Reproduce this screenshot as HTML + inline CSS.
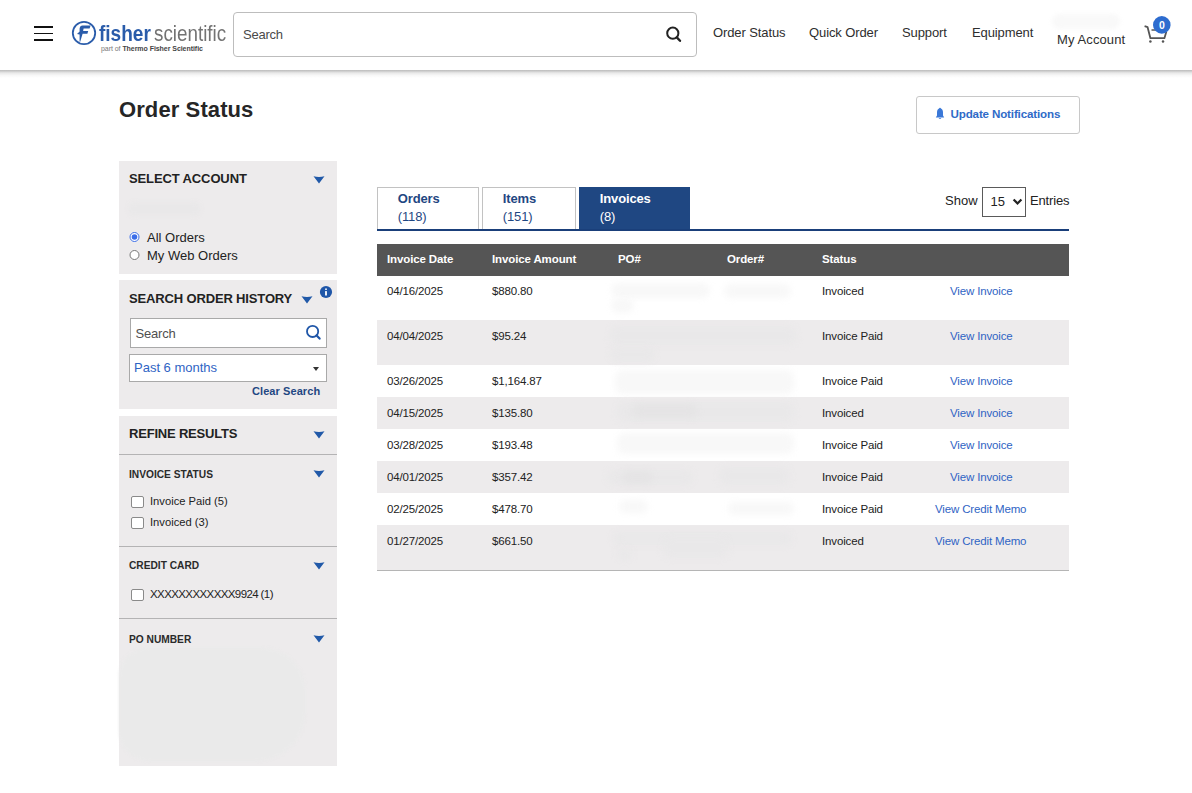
<!DOCTYPE html>
<html><head><meta charset="utf-8">
<style>
*{box-sizing:border-box;margin:0;padding:0}
html,body{width:1192px;height:793px;overflow:hidden;background:#fff;font-family:"Liberation Sans",sans-serif;color:#222}
.abs{position:absolute}
.t{position:absolute;white-space:nowrap;line-height:1}
#hdr{position:absolute;left:0;top:0;width:1192px;height:70px;background:#fff}
#shd{position:absolute;left:0;top:70px;width:1192px;height:8px;background:linear-gradient(#bfbfbf 0,#c6c6c6 1px,#dcdcdc 2px,#ececec 3.5px,#f8f8f8 5.5px,#fff 8px)}
.ham{position:absolute;left:34px;width:19px;height:2px;background:#111}
#sbox{position:absolute;left:233px;top:12px;width:464px;height:45px;border:1px solid #bdbdbd;border-radius:4px;background:#fff}
.nav{position:absolute;top:26px;font-size:13px;color:#2e2e2e;line-height:13px;white-space:nowrap;letter-spacing:-0.1px}
.panel{position:absolute;left:119px;width:218px;background:#edebec}
.ph{position:absolute;left:10px;font-size:13px;font-weight:700;color:#222;line-height:1;white-space:nowrap}
.arr{position:absolute;width:12px;height:8px;background:#2159a8;clip-path:path("M0.5 0.3 Q6 1.9 11.5 0.3 L6 7.6 Z")}
.sep{position:absolute;left:0;width:218px;height:1px;background:#b4b3b4}
.sub{position:absolute;left:10px;font-size:10.2px;font-weight:700;color:#2a2a2a;line-height:1;white-space:nowrap}
.cb{position:absolute;left:12px;width:13px;height:12px;border:1px solid #8a8a8a;border-radius:2px;background:#fff}
.cbl{position:absolute;left:31px;font-size:11.2px;letter-spacing:0px;color:#222;line-height:1;white-space:nowrap;margin-top:0.4px}
.tab{position:absolute;top:187px;height:43px;border:1px solid #c2c2c2;border-bottom:none;background:#fff;color:#1f4782;font-size:13px;line-height:18px;padding:2.2px 0 0 19.8px;letter-spacing:-0.15px}
.tab b{font-weight:700}
#thead{position:absolute;left:377px;top:244px;width:692px;height:32px;background:#555}
.th{position:absolute;top:10px;font-size:11.5px;font-weight:700;color:#fff;line-height:1;white-space:nowrap;letter-spacing:-0.12px}
.row{position:absolute;left:377px;width:692px}
.g{background:#edebec}
.td{position:absolute;top:11px;font-size:11.5px;color:#222;line-height:1;white-space:nowrap;letter-spacing:-0.15px}
.lnk{color:#2f64c4}
.blur{position:absolute;filter:blur(3px);border-radius:8px}
</style></head><body>

<div id="shd"></div>
<div id="hdr">
  <div class="ham" style="top:26px"></div>
  <div class="ham" style="top:33px;height:1.2px"></div>
  <div class="ham" style="top:39px"></div>
  <!-- logo -->
  <svg class="abs" style="left:70px;top:19px" width="30" height="28" viewBox="0 0 30 28">
    <circle cx="14" cy="14" r="11.2" fill="none" stroke="#2a5caa" stroke-width="1.8"/>
    <path d="M9.6 9.5 Q10 6.4 12.5 6.4 L20.6 6.4 L19.6 9.4 L13.6 9.4 L13.1 12.1 L18.2 12.1 L17.4 14.8 L12.6 14.8 L10.2 22.8 L9.6 22.8 L9.6 15.6 L7 14.9 L9.6 12.4 Z" fill="#2a5caa"/>
  </svg>
  <div class="t" style="left:99px;top:23.3px;font-size:22px;font-weight:700;color:#2a5caa;transform:scaleX(0.865);transform-origin:0 0">fisher</div>
  <div class="t" style="left:153.5px;top:23.3px;font-size:22px;color:#737373;transform:scaleX(0.855);transform-origin:0 0">scientific</div>
  <div class="t" style="left:101px;top:45px;font-size:7px;color:#777;letter-spacing:-0.05px">part of <b style="color:#444">Thermo Fisher Scientific</b></div>

  <div id="sbox"></div>
  <div class="t" style="left:243px;top:28px;font-size:13px;color:#4a4a4a;letter-spacing:-0.25px">Search</div>
  <svg class="abs" style="left:664px;top:25px" width="20" height="20" viewBox="0 0 20 20">
    <circle cx="8.8" cy="8.2" r="5.6" fill="none" stroke="#222" stroke-width="2"/>
    <path d="M12.8 12.4 L16 15.8" stroke="#222" stroke-width="2.4" stroke-linecap="round"/>
  </svg>

  <div class="nav" style="left:713px">Order Status</div>
  <div class="nav" style="left:809px">Quick Order</div>
  <div class="nav" style="left:902px">Support</div>
  <div class="nav" style="left:972px">Equipment</div>
  <div class="nav" style="left:1057px;top:33px;letter-spacing:0.1px">My Account</div>
  <div class="blur" style="left:1052px;top:14px;width:68px;height:15px;background:#f9f9f9;filter:blur(2px)"></div>
  <svg class="abs" style="left:1140px;top:14px" width="34" height="32" viewBox="0 0 34 32">
    <path d="M4.6 12.2 L7.6 13.2 L10.4 24.2 L24.4 24.2 L26.4 17.6" fill="none" stroke="#555" stroke-width="1.8" stroke-linejoin="round"/>
    <path d="M11.5 16 L19 16" stroke="#555" stroke-width="1.5"/>
    <circle cx="10.4" cy="27.6" r="1.25" fill="#555"/>
    <circle cx="23" cy="27.6" r="1.25" fill="#555"/>
    <circle cx="21.8" cy="10.9" r="8.8" fill="#2d6ccf"/>
    <text x="21.8" y="14.6" text-anchor="middle" font-family="Liberation Sans" font-weight="700" font-size="10.5" fill="#fff">0</text>
  </svg>
</div>

<!-- title -->
<div class="t" style="left:119px;top:99.3px;font-size:22px;font-weight:700;color:#262626;letter-spacing:0.1px">Order Status</div>
<div class="abs" style="left:916px;top:96px;width:164px;height:38px;border:1px solid #c8c8c8;border-radius:3px;background:#fff"></div>
<svg class="abs" style="left:935px;top:106.5px" width="10" height="14" viewBox="0 0 10 14">
  <circle cx="5" cy="1.6" r="0.9" fill="#3a78d8"/>
  <path d="M5 1.6 C2.6 1.6 2 3.6 2 5.6 L2 8.6 L0.8 10.4 L9.2 10.4 L8 8.6 L8 5.6 C8 3.6 7.4 1.6 5 1.6 Z" fill="#3a78d8"/>
  <path d="M3.8 11.2 L6.2 11.2 C6.2 12.4 3.8 12.4 3.8 11.2 Z" fill="#3a78d8"/>
</svg>
<div class="t" style="left:950.5px;top:107.7px;font-size:11.6px;font-weight:700;color:#2f6bc8;letter-spacing:-0.15px">Update Notifications</div>

<!-- sidebar panel 1 -->
<div class="panel" style="top:161px;height:113px">
  <div class="ph" style="top:10.5px;letter-spacing:-0.12px">SELECT ACCOUNT</div>
  <div class="arr" style="left:194px;top:15px"></div>
  <div class="blur" style="left:9px;top:40.5px;width:73px;height:14px;background:#e9e8e9;filter:blur(2px)"></div>
  <svg class="abs" style="left:10px;top:70px" width="12" height="30" viewBox="0 0 12 30">
    <circle cx="5.5" cy="6" r="4.5" fill="#fff" stroke="#3b6ee8" stroke-width="1"/>
    <circle cx="5.5" cy="6" r="2.8" fill="#3b6ee8"/>
    <circle cx="5.5" cy="24" r="4.5" fill="#fff" stroke="#777" stroke-width="1"/>
  </svg>
  <div class="t" style="left:28px;top:70px;font-size:13px;color:#222">All Orders</div>
  <div class="t" style="left:28px;top:88px;font-size:13px;color:#222">My Web Orders</div>
</div>

<!-- sidebar panel 2 -->
<div class="panel" style="top:280px;height:129px">
  <div class="ph" style="top:11.5px;letter-spacing:-0.15px">SEARCH ORDER HISTORY</div>
  <div class="arr" style="left:182px;top:16px"></div>
  <svg class="abs" style="left:200px;top:5.3px" width="14" height="14" viewBox="0 0 14 14">
    <circle cx="7" cy="7" r="6.1" fill="#1f56a8"/>
    <rect x="6.1" y="6.1" width="1.8" height="4.4" fill="#fff"/>
    <rect x="6.1" y="3.5" width="1.8" height="1.4" fill="#fff"/>
  </svg>
  <div class="abs" style="left:11px;top:38px;width:197px;height:30px;border:1px solid #a9a9a9;background:#fff"></div>
  <div class="t" style="left:16.5px;top:47.2px;font-size:13px;color:#4f4f4f;letter-spacing:-0.2px">Search</div>
  <svg class="abs" style="left:186px;top:44px" width="18" height="18" viewBox="0 0 18 18">
    <circle cx="7.6" cy="7.4" r="5.6" fill="none" stroke="#1f56a8" stroke-width="1.8"/>
    <path d="M11.6 11.4 L14.6 14.6" stroke="#1f56a8" stroke-width="2.2" stroke-linecap="round"/>
  </svg>
  <div class="abs" style="left:10px;top:74px;width:198px;height:28px;border:1px solid #a9a9a9;background:#fff"></div>
  <div class="t" style="left:15px;top:81px;font-size:13px;color:#2f64c4">Past 6 months</div>
  <div class="abs" style="left:193.5px;top:86.8px;width:0;height:0;border-left:3.8px solid transparent;border-right:3.8px solid transparent;border-top:4px solid #333"></div>
  <div class="t" style="left:133px;top:106px;font-size:11px;font-weight:700;color:#1f4782;letter-spacing:0.08px">Clear Search</div>
</div>

<!-- sidebar panel 3 -->
<div class="panel" style="top:416px;height:350px">
  <div class="ph" style="top:11px;letter-spacing:-0.2px">REFINE RESULTS</div>
  <div class="arr" style="left:194px;top:15px"></div>
  <div class="sep" style="top:38px"></div>

  <div class="sub" style="top:53.5px">INVOICE STATUS</div>
  <div class="arr" style="left:194px;top:54px"></div>
  <div class="cb" style="top:80px"></div>
  <div class="cbl" style="top:80px">Invoice Paid (5)</div>
  <div class="cb" style="top:101px"></div>
  <div class="cbl" style="top:100.3px">Invoiced (3)</div>
  <div class="sep" style="top:130px"></div>

  <div class="sub" style="top:145px">CREDIT CARD</div>
  <div class="arr" style="left:194px;top:146px"></div>
  <div class="cb" style="top:173px"></div>
  <div class="cbl" style="top:172.3px;font-size:11.5px;letter-spacing:-0.6px">XXXXXXXXXXXX9924 (1)</div>
  <div class="sep" style="top:202px"></div>

  <div class="sub" style="top:218.5px">PO NUMBER</div>
  <div class="arr" style="left:194px;top:219px"></div>
  <div class="blur" style="left:0px;top:232px;width:186px;height:113px;background:#eaeaea;border-radius:28px 42px 48px 30px;filter:blur(1.8px)"></div>
</div>

<!-- tabs -->
<div class="tab" style="left:377px;width:102px"><b>Orders</b><br>(118)</div>
<div class="tab" style="left:482px;width:94px"><b>Items</b><br>(151)</div>
<div class="tab" style="left:579px;width:111px;background:#1f4782;border-color:#1f4782;color:#fff"><b>Invoices</b><br>(8)</div>
<div class="abs" style="left:377px;top:229px;width:692px;height:2px;background:#1a3f7a"></div>

<div class="t" style="left:945px;top:194px;font-size:13px;color:#222">Show</div>
<div class="abs" style="left:982px;top:187px;width:44px;height:30px;border:1.3px solid #5a5a5a;background:#fff"></div>
<div class="t" style="left:990.5px;top:195px;font-size:13px;color:#222">15</div>
<svg class="abs" style="left:1011.5px;top:197px" width="11" height="9" viewBox="0 0 11 9"><path d="M1.6 2.4 L5.5 6.4 L9.4 2.4" fill="none" stroke="#222" stroke-width="2.2"/></svg>
<div class="t" style="left:1030px;top:194px;font-size:13px;color:#222;letter-spacing:-0.15px">Entries</div>

<!-- table -->
<div id="thead">
  <div class="th" style="left:10px">Invoice Date</div>
  <div class="th" style="left:115px">Invoice Amount</div>
  <div class="th" style="left:241px">PO#</div>
  <div class="th" style="left:350px">Order#</div>
  <div class="th" style="left:445px">Status</div>
</div>

<div class="row" style="top:276px;height:44px">
  <div class="td" style="top:10px;left:10px">04/16/2025</div><div class="td" style="top:10px;left:115px">$880.80</div>
  <div class="td" style="top:10px;left:445px">Invoiced</div><div class="td lnk" style="top:10px;left:573px">View Invoice</div>
</div>
<div class="row g" style="top:320px;height:45px">
  <div class="td" style="left:10px">04/04/2025</div><div class="td" style="left:115px">$95.24</div>
  <div class="td" style="left:445px">Invoice Paid</div><div class="td lnk" style="left:573px">View Invoice</div>
</div>
<div class="row" style="top:365px;height:32px">
  <div class="td" style="left:10px">03/26/2025</div><div class="td" style="left:115px">$1,164.87</div>
  <div class="td" style="left:445px">Invoice Paid</div><div class="td lnk" style="left:573px">View Invoice</div>
</div>
<div class="row g" style="top:397px;height:32px">
  <div class="td" style="left:10px">04/15/2025</div><div class="td" style="left:115px">$135.80</div>
  <div class="td" style="left:445px">Invoiced</div><div class="td lnk" style="left:573px">View Invoice</div>
</div>
<div class="row" style="top:429px;height:32px">
  <div class="td" style="left:10px">03/28/2025</div><div class="td" style="left:115px">$193.48</div>
  <div class="td" style="left:445px">Invoice Paid</div><div class="td lnk" style="left:573px">View Invoice</div>
</div>
<div class="row g" style="top:461px;height:32px">
  <div class="td" style="left:10px">04/01/2025</div><div class="td" style="left:115px">$357.42</div>
  <div class="td" style="left:445px">Invoice Paid</div><div class="td lnk" style="left:573px">View Invoice</div>
</div>
<div class="row" style="top:493px;height:32px">
  <div class="td" style="left:10px">02/25/2025</div><div class="td" style="left:115px">$478.70</div>
  <div class="td" style="left:445px">Invoice Paid</div><div class="td lnk" style="left:558px">View Credit Memo</div>
</div>
<div class="row g" style="top:525px;height:46px;border-bottom:1px solid #b5b5b5">
  <div class="td" style="left:10px">01/27/2025</div><div class="td" style="left:115px">$661.50</div>
  <div class="td" style="left:445px">Invoiced</div><div class="td lnk" style="left:558px">View Credit Memo</div>
</div>

<!-- blurred cells -->
<div class="blur" style="left:611px;top:283px;width:99px;height:15px;background:#f8f8f8"></div>
<div class="blur" style="left:611px;top:298px;width:23px;height:15px;background:#f8f8f8"></div>
<div class="blur" style="left:724px;top:283.5px;width:67px;height:14.5px;background:#f8f8f8"></div>
<div class="blur" style="left:610px;top:325.5px;width:186px;height:19.5px;background:#e9e8e9"></div>
<div class="blur" style="left:610px;top:347px;width:45px;height:15px;background:#e9e8e9"></div>
<div class="blur" style="left:615px;top:370px;width:179px;height:24px;background:#f8f8f8"></div>
<div class="blur" style="left:617px;top:402px;width:177px;height:20px;background:#e9e8e9"></div>
<div class="blur" style="left:633px;top:404px;width:64px;height:14px;background:#e5e4e5"></div>
<div class="blur" style="left:617px;top:433px;width:177px;height:21px;background:#f8f8f8"></div>
<div class="blur" style="left:607px;top:470px;width:86px;height:15px;background:#e9e8e9"></div>
<div class="blur" style="left:622px;top:471px;width:31px;height:13px;background:#e5e4e5"></div>
<div class="blur" style="left:719px;top:467px;width:71px;height:18px;background:#e9e8e9"></div>
<div class="blur" style="left:619px;top:500px;width:29px;height:13px;background:#f8f8f8"></div>
<div class="blur" style="left:728px;top:502px;width:66px;height:13px;background:#f8f8f8"></div>
<div class="blur" style="left:613px;top:532px;width:179px;height:13px;background:#e9e8e9"></div>
<div class="blur" style="left:663px;top:537px;width:65px;height:21px;background:#e9e8e9"></div>
<div class="blur" style="left:617px;top:549px;width:15px;height:11px;background:#e9e8e9"></div>
</body></html>
